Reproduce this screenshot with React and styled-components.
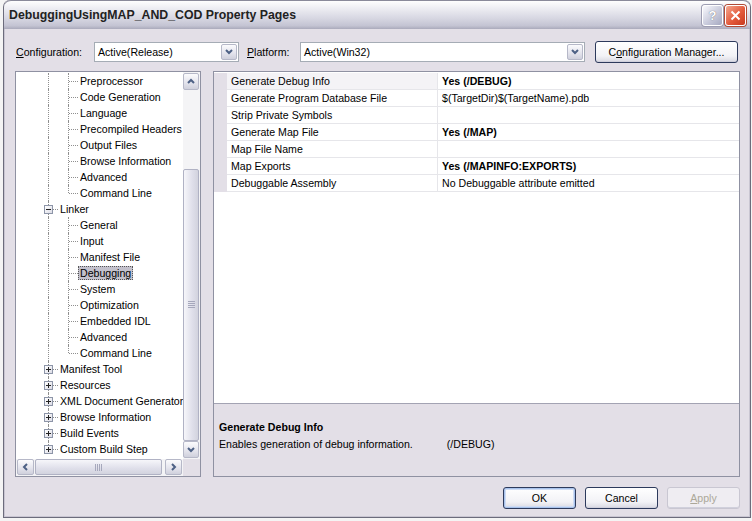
import styled, { createGlobalStyle } from "styled-components";

const GlobalStyle = createGlobalStyle`
  html, body {
    margin: 0;
    padding: 0;
    background: #f4f4f4;
  }
  body {
    font-family: "Liberation Sans", Arial, sans-serif;
    font-size: 10.6px;
    color: #000;
  }
`;

const Window = styled.div`
  margin-left: 3px;
  width: 746px;
  height: 517px;
  border: 1px solid #6c6c7c;
  border-top: none;
  border-radius: 7px 7px 0 0;
  background: #e3dfe7;
  display: flex;
  flex-direction: column;
  box-shadow: inset 1px 0 0 #c9c6d2, inset -1px 0 0 #c9c6d2, inset 0 -1px 0 #c9c6d2;
`;

const TitleBar = styled.div`
  height: 31px;
  display: flex;
  align-items: center;
  padding: 0 4px 0 5px;
  border-radius: 7px 7px 0 0;
  border-top: 1px solid #8a8a9a;
  background: linear-gradient(#fefefe 0%, #eeeef3 25%, #d8d8e3 60%, #c4c4d3 88%, #aaaabb 100%);
  box-sizing: border-box;
`;

const Title = styled.div`
  flex: 1;
  font-family: "Liberation Sans", Arial, sans-serif;
  font-weight: bold;
  font-size: 12.3px;
  color: #222;
`;

const CaptionButton = styled.div`
  width: 21px;
  height: 21px;
  box-sizing: border-box;
  margin-left: 2px;
  border-radius: 3px;
  border: 1px solid #fff;
  display: flex;
  align-items: center;
  justify-content: center;
  background: ${(p) =>
    p.$close
      ? "linear-gradient(135deg, #f4a890, #e35a3c 55%, #c8391e)"
      : "linear-gradient(135deg, #fafafe, #c9cbdc 55%, #a6a9c0)"};
  box-shadow: 0 0 0 1px ${(p) => (p.$close ? "#b04a36" : "#9d9db2")};
  color: #fff;
  font-family: "Liberation Sans", sans-serif;
  font-weight: bold;
  font-size: 13px;
  text-shadow: 0 0 1px #555;
`;

const Client = styled.div`
  flex: 1;
  display: flex;
  flex-direction: column;
  padding: 12px 10px 8px 11px;
  box-sizing: border-box;
`;

const ConfigRow = styled.div`
  display: flex;
  align-items: center;
  height: 21px;
`;

const Label = styled.span`
  margin-left: ${(p) => p.$ml || 1}px;
  width: ${(p) => p.$w}px;
  u { text-decoration: underline; }
`;

const Combo = styled.div`
  width: ${(p) => p.$w}px;
  height: 20px;
  box-sizing: border-box;
  border: 1px solid #a5acb5;
  background: #fff;
  display: flex;
  align-items: center;
  padding-left: 3px;
`;

const ComboText = styled.span`
  flex: 1;
`;

const ArrowBtn = styled.div`
  width: ${(p) => p.$w || 16}px;
  height: ${(p) => p.$h || 16}px;
  box-sizing: border-box;
  border: 1px solid #b6b8c8;
  border-radius: 2px;
  background: linear-gradient(#fbfbfd, #e3e3ec 60%, #cfd0dc);
  display: flex;
  align-items: center;
  justify-content: center;
  margin-right: 1px;
`;

const Button = styled.div`
  width: ${(p) => p.$w || 73}px;
  height: 22px;
  margin-left: ${(p) => p.$ml || 0}px;
  box-sizing: border-box;
  border: 1px solid ${(p) => (p.$disabled ? "#c9c7d2" : "#2d3a5c")};
  border-radius: 3px;
  background: ${(p) =>
    p.$disabled ? "#efedf2" : "linear-gradient(#ffffff, #f2f2f6 70%, #d8d8e2)"};
  box-shadow: ${(p) =>
    p.$default ? "inset 0 0 0 1px #a8c2ec, inset 0 0 0 2px #cfdcf4" : "inset 0 -1px 0 #d0d0dc"};
  color: ${(p) => (p.$disabled ? "#aca899" : "#000")};
  display: flex;
  align-items: center;
  justify-content: center;
  u { text-decoration: underline; }
`;

const Main = styled.div`
  display: flex;
  margin-top: 9px;
  height: 406px;
  gap: 12px;
`;

const TreePanel = styled.div`
  width: 186px;
  box-sizing: border-box;
  border: 1px solid #8f91a2;
  background: #fff;
  display: grid;
  grid-template-columns: 1fr 17px;
  grid-template-rows: 1fr 17px;
`;

const TreeList = styled.div`
  padding: 1px 0 0 23px;
  overflow: hidden;
`;

const TreeRow = styled.div`
  height: 16px;
  display: flex;
  align-items: stretch;
  white-space: nowrap;
`;

const Guide = styled.div`
  width: 20px;
  flex: none;
  position: relative;
  &::before {
    content: "";
    position: absolute;
    left: 9px;
    top: 0;
    height: ${(p) => (p.$end ? "8px" : p.$line || p.$tee || p.$box ? "16px" : "0")};
    border-left: 1px dotted #8f8f8f;
  }
  &::after {
    content: "";
    position: absolute;
    left: 10px;
    top: 8px;
    width: ${(p) => (p.$tee || p.$end || p.$box ? "9px" : "0")};
    border-top: 1px dotted #8f8f8f;
  }
`;

const Expander = styled.div`
  position: absolute;
  left: 5px;
  top: 4px;
  width: 9px;
  height: 9px;
  box-sizing: border-box;
  border: 1px solid #8d95a8;
  background: linear-gradient(135deg, #fff, #dcdce6);
  z-index: 1;
  display: flex;
  align-items: center;
  justify-content: center;
`;

const NodeText = styled.span`
  align-self: center;
  padding: 1px 2px;
  margin-left: -1px;
  line-height: 12px;
  ${(p) =>
    p.$selected &&
    `background: #c3c1cc; outline: 1px dotted #555; outline-offset: -1px;`}
`;

const VScroll = styled.div`
  grid-row: 1 / 2;
  grid-column: 2;
  background: #f4f4f6;
  display: flex;
  flex-direction: column;
  padding: 1px 0;
`;

const Track = styled.div`
  flex: 1;
  display: flex;
  flex-direction: ${(p) => (p.$h ? "row" : "column")};
`;

const Thumb = styled.div`
  box-sizing: border-box;
  border: 1px solid #b0b2c4;
  border-radius: 2px;
  background: ${(p) =>
    p.$h
      ? "linear-gradient(#f6f6fa, #dfdfea 60%, #d2d3de)"
      : "linear-gradient(90deg, #f6f6fa, #dfdfea 60%, #d2d3de)"};
  display: flex;
  align-items: center;
  justify-content: center;
  margin-right: 1px;
`;

const ThumbGap = styled.div`
  height: 79px;
`;

const HScroll = styled.div`
  grid-row: 2;
  grid-column: 1;
  background: #f4f4f6;
  display: flex;
  padding-left: 1px;
`;

const Corner = styled.div`
  grid-row: 2;
  grid-column: 2;
  background: #e3dfe7;
`;

const GridPanel = styled.div`
  flex: 1;
  box-sizing: border-box;
  border: 1px solid #8f91a2;
  display: flex;
  flex-direction: column;
`;

const PropArea = styled.div`
  flex: 1;
  background: #fff;
  padding-top: 1px;
  border-bottom: 1px solid #a3a3b3;
`;

const PropRow = styled.div`
  display: flex;
  height: 17px;
`;

const Margin = styled.div`
  width: 13px;
  background: #e3dfe7;
`;

const NameCell = styled.div`
  width: 206px;
  padding-left: 4px;
  border-bottom: 1px solid #e6e6ea;
  border-right: 1px solid #e6e6ea;
  display: flex;
  align-items: center;
  background: ${(p) => (p.$active ? "#f4f3f6" : "#fff")};
`;

const ValueCell = styled.div`
  flex: 1;
  padding-left: 4px;
  border-bottom: 1px solid #e6e6ea;
  display: flex;
  align-items: center;
  font-weight: ${(p) => (p.$bold ? "bold" : "normal")};
`;

const Description = styled.div`
  height: 72px;
  box-sizing: border-box;
  padding: 15px 5px 0;
  line-height: 17px;
`;

const DescTitle = styled.div`
  font-weight: bold;
`;

const Tab = styled.span`
  margin-left: 34px;
`;

const ButtonRow = styled.div`
  display: flex;
  justify-content: flex-end;
  gap: 9px;
  margin-top: 10px;
`;

const Chevron = ({ dir = "down", color = "#4d6185" }) => {
  const paths = {
    down: "M1 2 L4 5 L7 2",
    up: "M1 5 L4 2 L7 5",
    left: "M5 1 L2 4 L5 7",
    right: "M2 1 L5 4 L2 7",
  };
  return (
    <svg width="8" height="8" viewBox="0 0 8 8">
      <path d={paths[dir]} fill="none" stroke={color} strokeWidth="2" />
    </svg>
  );
};

const Grip = ({ h }) => (
  <svg width={h ? 8 : 7} height={h ? 7 : 8} viewBox={h ? "0 0 8 7" : "0 0 7 8"}>
    {[0, 2, 4, 6].map((o) =>
      h ? (
        <line key={o} x1={o + 0.5} y1="0" x2={o + 0.5} y2="7" stroke="#a6a8bc" />
      ) : (
        <line key={o} x1="0" y1={o + 0.5} x2="7" y2={o + 0.5} stroke="#a6a8bc" />
      )
    )}
  </svg>
);

const Sign = ({ minus }) => (
  <svg width="7" height="7" viewBox="0 0 7 7">
    <line x1="1" y1="3.5" x2="6" y2="3.5" stroke="#222" />
    {!minus && <line x1="3.5" y1="1" x2="3.5" y2="6" stroke="#222" />}
  </svg>
);

const cppItems = [
  "Preprocessor",
  "Code Generation",
  "Language",
  "Precompiled Headers",
  "Output Files",
  "Browse Information",
  "Advanced",
  "Command Line",
];

const linkerItems = [
  "General",
  "Input",
  "Manifest File",
  "Debugging",
  "System",
  "Optimization",
  "Embedded IDL",
  "Advanced",
  "Command Line",
];

const tools = [
  "Manifest Tool",
  "Resources",
  "XML Document Generator",
  "Browse Information",
  "Build Events",
  "Custom Build Step",
];

const props = [
  ["Generate Debug Info", "Yes (/DEBUG)", true],
  ["Generate Program Database File", "$(TargetDir)$(TargetName).pdb", false],
  ["Strip Private Symbols", "", false],
  ["Generate Map File", "Yes (/MAP)", true],
  ["Map File Name", "", false],
  ["Map Exports", "Yes (/MAPINFO:EXPORTS)", true],
  ["Debuggable Assembly", "No Debuggable attribute emitted", false],
];

function App() {
  return (
    <>
      <GlobalStyle />
      <Window>
        <TitleBar>
          <Title>DebuggingUsingMAP_AND_COD Property Pages</Title>
          <CaptionButton>?</CaptionButton>
          <CaptionButton $close>
            <svg width="11" height="11" viewBox="0 0 11 11">
              <path d="M1.5 1.5 L9.5 9.5 M9.5 1.5 L1.5 9.5" stroke="#fff" strokeWidth="2" />
            </svg>
          </CaptionButton>
        </TitleBar>
        <Client>
          <ConfigRow>
            <Label $w={78}>
              <u>C</u>onfiguration:
            </Label>
            <Combo $w={145}>
              <ComboText>Active(Release)</ComboText>
              <ArrowBtn>
                <Chevron />
              </ArrowBtn>
            </Combo>
            <Label $w={53} $ml={8}>
              <u>P</u>latform:
            </Label>
            <Combo $w={285}>
              <ComboText>Active(Win32)</ComboText>
              <ArrowBtn>
                <Chevron />
              </ArrowBtn>
            </Combo>
            <Button $w={143} $ml={10}>
              C<u>o</u>nfiguration Manager...
            </Button>
          </ConfigRow>
          <Main>
            <TreePanel>
              <TreeList>
                {cppItems.map((t, i) => (
                  <TreeRow key={"c" + i}>
                    <Guide $line />
                    <Guide $tee={i < cppItems.length - 1} $end={i === cppItems.length - 1} />
                    <NodeText>{t}</NodeText>
                  </TreeRow>
                ))}
                <TreeRow>
                  <Guide $box>
                    <Expander>
                      <Sign minus />
                    </Expander>
                  </Guide>
                  <NodeText>Linker</NodeText>
                </TreeRow>
                {linkerItems.map((t, i) => (
                  <TreeRow key={"l" + i}>
                    <Guide $line />
                    <Guide $tee={i < linkerItems.length - 1} $end={i === linkerItems.length - 1} />
                    <NodeText $selected={t === "Debugging"}>{t}</NodeText>
                  </TreeRow>
                ))}
                {tools.map((t, i) => (
                  <TreeRow key={"t" + i}>
                    <Guide $box={i < tools.length - 1} $end={i === tools.length - 1}>
                      <Expander>
                        <Sign />
                      </Expander>
                    </Guide>
                    <NodeText>{t}</NodeText>
                  </TreeRow>
                ))}
              </TreeList>
              <VScroll>
                <ArrowBtn $w={16} $h={17}>
                  <Chevron dir="up" />
                </ArrowBtn>
                <Track>
                  <ThumbGap />
                  <Thumb style={{ height: 272 }}>
                    <Grip />
                  </Thumb>
                </Track>
                <ArrowBtn $w={16} $h={17}>
                  <Chevron />
                </ArrowBtn>
              </VScroll>
              <HScroll>
                <ArrowBtn $w={17} $h={16}>
                  <Chevron dir="left" />
                </ArrowBtn>
                <Track $h>
                  <Thumb $h style={{ width: 127, height: 16 }}>
                    <Grip h />
                  </Thumb>
                </Track>
                <ArrowBtn $w={17} $h={16}>
                  <Chevron dir="right" />
                </ArrowBtn>
              </HScroll>
              <Corner />
            </TreePanel>
            <GridPanel>
              <PropArea>
                {props.map(([name, value, bold], i) => (
                  <PropRow key={name}>
                    <Margin />
                    <NameCell $active={i === 0}>{name}</NameCell>
                    <ValueCell $bold={bold}>{value}</ValueCell>
                  </PropRow>
                ))}
              </PropArea>
              <Description>
                <DescTitle>Generate Debug Info</DescTitle>
                <div>
                  Enables generation of debug information.<Tab>(/DEBUG)</Tab>
                </div>
              </Description>
            </GridPanel>
          </Main>
          <ButtonRow>
            <Button $default>OK</Button>
            <Button>Cancel</Button>
            <Button $disabled>
              <u>A</u>pply
            </Button>
          </ButtonRow>
        </Client>
      </Window>
    </>
  );
}

export default App;
